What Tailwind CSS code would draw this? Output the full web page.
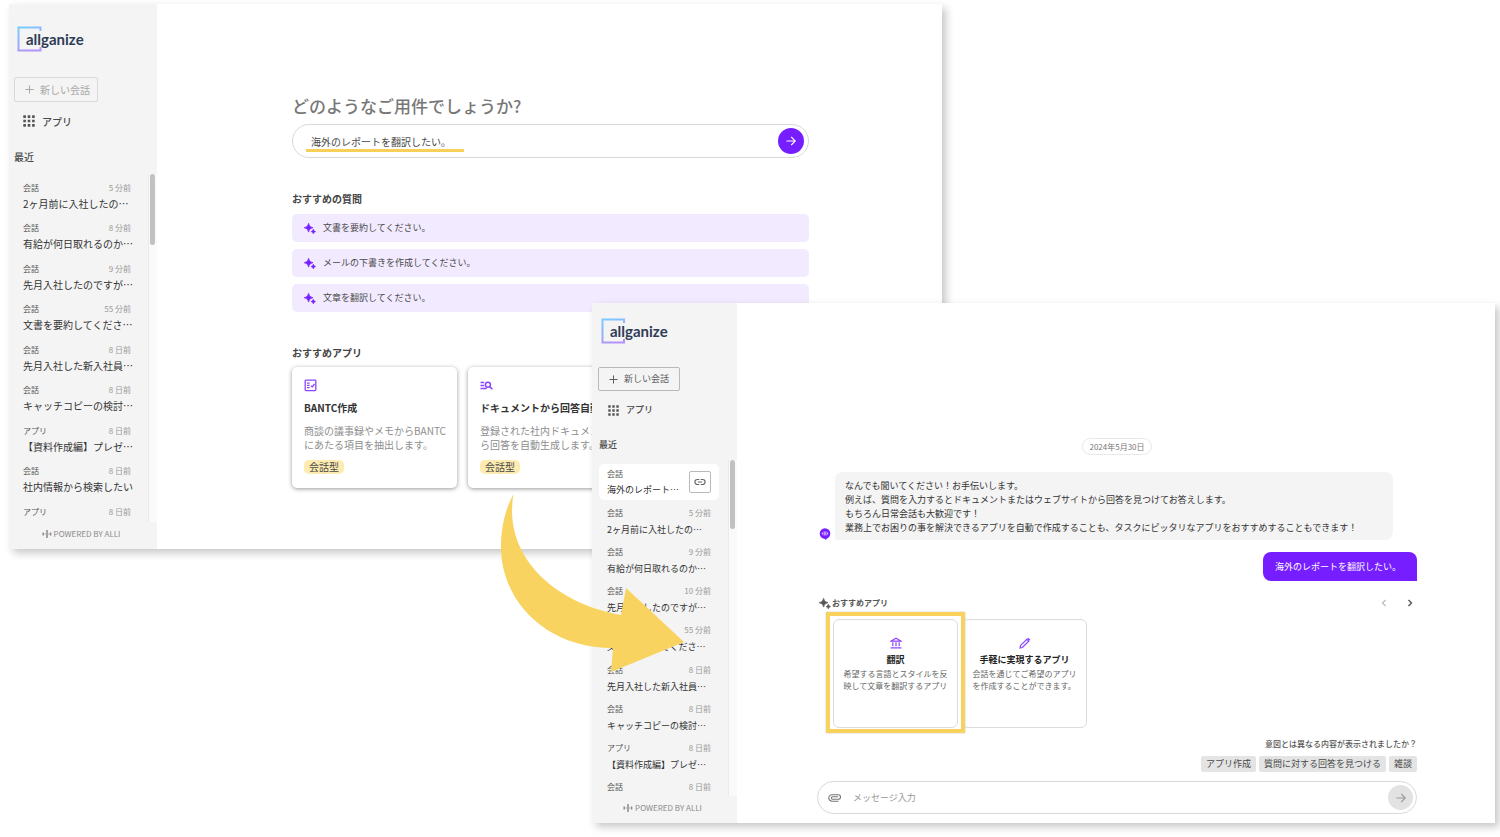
<!DOCTYPE html>
<html lang="ja">
<head>
<meta charset="utf-8">
<title>allganize</title>
<script src="https://cdn.jsdelivr.net/npm/@tailwindcss/browser@4"></script>
</head>
<body class="bg-white font-['Noto_Sans_CJK_JP',sans-serif] text-[10px] text-[#4a4a4a]">

<svg class="absolute size-0" aria-hidden="true">
  <defs>
    <linearGradient id="brand" gradientUnits="userSpaceOnUse" x1="8" y1="2" x2="16" y2="26"><stop offset="0" stop-color="#7cc9ff"/><stop offset="1" stop-color="#b592fa"/></linearGradient>
    <symbol id="plus" viewBox="0 0 10 10"><path d="M5 .5v9M.5 5h9" stroke="currentColor" stroke-width="1.1" fill="none"/></symbol>
    <symbol id="grid" viewBox="0 0 12 12"><path d="M.3.3h2.6v2.6H.3zM4.7.3h2.6v2.6H4.7zM9.1.3h2.6v2.6H9.1zM.3 4.7h2.6v2.6H.3zM4.7 4.7h2.6v2.6H4.7zM9.1 4.7h2.6v2.6H9.1zM.3 9.1h2.6v2.6H.3zM4.7 9.1h2.6v2.6H4.7zM9.1 9.1h2.6v2.6H9.1z" fill="currentColor"/></symbol>
    <symbol id="spark" viewBox="0 0 12 11"><path d="M4.6.3Q5 4.3 9 4.7 5 5.1 4.6 9.1 4.2 5.1.2 4.7 4.2 4.3 4.6.3zM9.3 6.3Q9.6 8.3 11.5 8.6 9.6 8.9 9.3 10.8 9 8.9 7.1 8.6 9 8.3 9.3 6.3z" fill="currentColor" stroke="currentColor" stroke-width=".7"/></symbol>
    <symbol id="arrow" viewBox="0 0 10 10"><path d="M.5 5h8.6M5.2.9 9.2 5 5.2 9.1" stroke="currentColor" stroke-width="1.2" fill="none"/></symbol>
    <symbol id="bars" viewBox="0 0 10 8"><path d="M1.2 2.4v3.2M8.6 2.4v3.2" stroke="currentColor" stroke-width="1.5"/><path d="M3.2 3v2" stroke="currentColor" stroke-width=".5"/><path d="M5 0v8" stroke="currentColor" stroke-width="1.5"/><path d="M6.8 3v2" stroke="currentColor" stroke-width=".5"/></symbol>
  </defs>
</svg>

<div class="relative min-h-screen overflow-hidden">

  <!-- Home window -->
  <section class="absolute top-1 left-[9px] flex h-[545px] w-[933px] bg-white shadow-[4px_4px_8px_rgba(0,0,0,0.22)]">
    <aside class="flex w-[148px] shrink-0 flex-col bg-[#f4f4f4]">
      <a href="#" class="mt-[21px] ml-2 flex h-7 items-center font-['Lato',sans-serif] text-[15px] font-bold text-[#2f3c56]">
        <svg class="h-7 w-[25px]" viewBox="0 0 25 28"><path d="M23.5 6V2.5h-22v23h22V22" fill="none" stroke="url(#brand)" stroke-width="2"/></svg>
        <span class="-ml-4 leading-5">allganize</span>
      </a>
      <button class="mt-6 ml-[5px] flex h-[25px] w-[84px] items-center gap-1.5 rounded-xs border border-[#d9d9d9] pb-px pl-2.5 text-[#a9a9a9]">
        <svg class="size-[9px]"><use href="#plus"/></svg>新しい会話
      </button>
      <a href="#" class="mt-[9px] ml-3.5 flex h-5 items-center gap-[7px] font-medium"><svg class="size-3 text-[#555]"><use href="#grid"/></svg>アプリ</a>
      <h2 class="mt-4 ml-[5px] h-5 leading-5 font-medium">最近</h2>
      <div class="mt-[7px] flex min-h-0 flex-1 overflow-hidden">
        <ul class="mt-1.5 grid h-[364px] flex-1 auto-rows-fr grid-cols-1 pr-[17px] pl-3.5 [&_a]:block [&_b]:block [&_b]:leading-5 [&_b]:font-normal [&_b]:text-[#333] [&_b]:whitespace-nowrap [&_p]:flex [&_p]:justify-between [&_p]:pt-0.5 [&_p]:text-[8px] [&_p]:leading-3 [&_p]:text-[#555] [&_time]:text-[#999]">
          <li><a href="#"><p>会話<time>5 分前</time></p><b>2ヶ月前に入社したの…</b></a></li>
          <li><a href="#"><p>会話<time>8 分前</time></p><b>有給が何日取れるのか…</b></a></li>
          <li><a href="#"><p>会話<time>9 分前</time></p><b>先月入社したのですが…</b></a></li>
          <li><a href="#"><p>会話<time>55 分前</time></p><b>文書を要約してくださ…</b></a></li>
          <li><a href="#"><p>会話<time>8 日前</time></p><b>先月入社した新入社員…</b></a></li>
          <li><a href="#"><p>会話<time>8 日前</time></p><b>キャッチコピーの検討…</b></a></li>
          <li><a href="#"><p>アプリ<time>8 日前</time></p><b>【資料作成編】プレゼ…</b></a></li>
          <li><a href="#"><p>会話<time>8 日前</time></p><b>社内情報から検索したい</b></a></li>
          <li><a href="#"><p>アプリ<time>8 日前</time></p></a></li>
        </ul>
        <div class="w-[9px] shrink-0 border-l border-[#eaeaea] bg-[#fafafa] pl-px"><div class="h-[71px] w-[5px] rounded-full bg-[#c1c1c1]"></div></div>
      </div>
      <footer class="flex h-[27px] items-center justify-center gap-0.5 pr-1 pb-1 text-[8px] text-[#8a8a8a]"><svg class="h-2 w-2.5"><use href="#bars"/></svg>POWERED BY ALLI</footer>
    </aside>

    <main class="flex-1 pt-[88px] pl-0.5">
      <div class="mx-auto max-w-[517px]">
        <h1 class="h-8 text-[17px] leading-7 font-medium text-[#777]">どのようなご用件でしょうか?</h1>
        <form class="relative flex h-[34px] items-center rounded-full border border-[#d9d9d9] pr-1 pl-[18px]">
          <input aria-label="ご用件" class="min-w-0 flex-1 outline-none" value="海外のレポートを翻訳したい。">
          <span class="absolute bottom-[5px] left-[13px] h-[3px] w-[158px] bg-[#f8cf57]"></span>
          <button type="button" aria-label="送信" class="grid size-[26px] place-items-center rounded-full bg-[#761eff] text-white"><svg class="size-2.5"><use href="#arrow"/></svg></button>
        </form>
        <h2 class="mt-[31px] h-[25px] leading-5 font-bold text-[#444]">おすすめの質問</h2>
        <div class="flex flex-col gap-[7px] text-[9px] [&_button]:flex [&_button]:h-7 [&_button]:items-center [&_button]:gap-[7px] [&_button]:rounded-[5px] [&_button]:bg-[#f2eaff] [&_button]:px-3 [&_svg]:h-[11px] [&_svg]:w-3 [&_svg]:text-[#761eff]">
          <button><svg><use href="#spark"/></svg>文書を要約してください。</button>
          <button><svg><use href="#spark"/></svg>メールの下書きを作成してください。</button>
          <button><svg><use href="#spark"/></svg>文章を翻訳してください。</button>
        </div>
        <h2 class="mt-[31px] h-6 leading-5 font-bold text-[#444]">おすすめアプリ</h2>
        <div class="grid grid-cols-3 gap-[11px] [&_article]:h-[121px] [&_article]:rounded-[5px] [&_article]:bg-white [&_article]:pt-3 [&_article]:pl-3 [&_article]:whitespace-nowrap [&_article]:shadow-[0_1px_4px_rgba(0,0,0,0.4)] [&_h3]:mt-1.5 [&_h3]:leading-5 [&_h3]:font-bold [&_h3]:text-[#333] [&_p]:mt-1.5 [&_p]:leading-[14px] [&_p]:text-[#8e8e8e] [&_span]:mt-2 [&_span]:inline-block [&_span]:rounded-[5px] [&_span]:bg-[#fdebb0] [&_span]:px-[5px] [&_span]:leading-[14px] [&_svg]:size-[13px] [&_svg]:text-[#8b46ff]">
          <article>
            <svg viewBox="0 0 13 13" fill="none" stroke="currentColor" stroke-width="1.3"><rect x="1.2" y="1.2" width="10.6" height="10.4" rx=".8"/><path d="M3 4.2h2.6M3 6.4h2.6M3 8.7h2.6M7 6.8l1.2 1.1L10.5 5"/></svg>
            <h3>BANTC作成</h3>
            <p>商談の議事録やメモからBANTC<br>にあたる項目を抽出します。</p>
            <span>会話型</span>
          </article>
          <article>
            <svg viewBox="0 0 13 13" fill="none" stroke="currentColor" stroke-width="1.5"><path d="M.5 3.4h3.6M.5 6.4h3.6M.5 9.5h6.2"/><circle cx="7.9" cy="5.8" r="2.5"/><path d="M9.7 7.6l2.7 2.7"/></svg>
            <h3>ドキュメントから回答自動生成</h3>
            <p>登録された社内ドキュメントか<br>ら回答を自動生成します。</p>
            <span>会話型</span>
          </article>
        </div>
      </div>
    </main>
  </section>

  <!-- Conversation window -->
  <section class="absolute top-[303px] left-[592px] flex h-[520px] w-[903px] bg-white text-[9px] shadow-[4px_4px_8px_rgba(0,0,0,0.22)]">
    <aside class="flex w-[145px] shrink-0 flex-col bg-[#f4f4f4]">
      <a href="#" class="mt-3.5 ml-[9px] flex h-7 items-center font-['Lato',sans-serif] text-[15px] font-bold text-[#2f3c56]">
        <svg class="h-7 w-[25px]" viewBox="0 0 25 28"><path d="M23 6V2.5H1.5v23H23V22" fill="none" stroke="url(#brand)" stroke-width="2"/></svg>
        <span class="-ml-4 leading-5">allganize</span>
      </a>
      <button class="mt-[22px] ml-1.5 flex h-6 w-[82px] items-center gap-1.5 rounded-xs border border-[#b9b9b9] pl-2.5 text-[#5c5c5c]">
        <svg class="size-[9px]"><use href="#plus"/></svg>新しい会話
      </button>
      <a href="#" class="mt-[9px] ml-4 flex h-5 items-center gap-[7px] font-medium"><svg class="size-[11px] text-[#555]"><use href="#grid"/></svg>アプリ</a>
      <h2 class="mt-[15px] ml-[7px] h-5 leading-5 font-medium">最近</h2>
      <div class="mt-[5px] flex min-h-0 flex-1 overflow-hidden">
        <div class="flex-1">
          <div class="mt-1 ml-[7px] flex h-9 w-[120px] items-center justify-between rounded-[5px] bg-white pr-2 pl-2">
            <a href="#" class="pt-1 whitespace-nowrap"><span class="block text-[8px] leading-3 text-[#555]">会話</span><span class="block leading-5 text-[#333]">海外のレポート…</span></a>
            <button aria-label="リンクをコピー" class="grid size-[22px] place-items-center rounded-xs border border-[#b9b9b9] text-[#666]">
              <svg class="h-2 w-3" viewBox="0 0 12 8" fill="none" stroke="currentColor" stroke-width="1.2"><path d="M5.3 1.5H3.4a2.5 2.5 0 000 5h1.9M6.7 1.5h1.9a2.5 2.5 0 010 5H6.7M3.8 4h4.4"/></svg>
            </button>
          </div>
          <ul class="mt-[5px] grid h-[313px] auto-rows-fr grid-cols-1 pr-[17px] pl-[15px] [&_a]:block [&_b]:block [&_b]:leading-[21px] [&_b]:font-normal [&_b]:text-[#333] [&_b]:whitespace-nowrap [&_p]:flex [&_p]:justify-between [&_p]:pt-0.5 [&_p]:text-[8px] [&_p]:leading-3 [&_p]:text-[#555] [&_time]:text-[#999]">
            <li><a href="#"><p>会話<time>5 分前</time></p><b>2ヶ月前に入社したの…</b></a></li>
            <li><a href="#"><p>会話<time>9 分前</time></p><b>有給が何日取れるのか…</b></a></li>
            <li><a href="#"><p>会話<time>10 分前</time></p><b>先月入社したのですが…</b></a></li>
            <li><a href="#"><p>会話<time>55 分前</time></p><b>文書を要約してくださ…</b></a></li>
            <li><a href="#"><p>会話<time>8 日前</time></p><b>先月入社した新入社員…</b></a></li>
            <li><a href="#"><p>会話<time>8 日前</time></p><b>キャッチコピーの検討…</b></a></li>
            <li><a href="#"><p>アプリ<time>8 日前</time></p><b>【資料作成編】プレゼ…</b></a></li>
            <li><a href="#"><p>会話<time>8 日前</time></p></a></li>
          </ul>
        </div>
        <div class="w-[9px] shrink-0 border-l border-[#eaeaea] bg-[#fafafa] pl-px"><div class="h-[69px] w-[5px] rounded-full bg-[#c1c1c1]"></div></div>
      </div>
      <footer class="flex h-[27px] items-center justify-center gap-0.5 pr-1 pb-1 text-[8px] text-[#8a8a8a]"><svg class="h-2 w-2.5"><use href="#bars"/></svg>POWERED BY ALLI</footer>
    </aside>

    <main class="flex-1 pl-0.5">
      <div class="mx-auto flex h-full max-w-[600px] flex-col pt-[135px] pb-[9px]">
        <time class="self-center rounded-full border border-[#e8e8e8] px-1.5 text-[8px] leading-[15px] text-[#777]">2024年5月30日</time>
        <div class="mt-[17px] flex items-end gap-1 pl-0.5">
          <svg class="h-3 w-3" viewBox="0 0 12 12"><circle cx="6" cy="5.5" r="5.3" fill="#761eff"/><path d="M5 10h3l-1.2 2z" fill="#761eff"/><path d="M3.4 4.5v2M5.2 3.5v4M6.9 3.5v4M8.6 4.5v2" stroke="#fff" stroke-width=".8"/></svg>
          <p class="w-[558px] rounded-lg rounded-bl-none bg-[#f4f4f4] px-2.5 pt-[7px] pb-[5px] leading-[14px] text-[#333]">なんでも聞いてください！お手伝いします。<br>例えば、質問を入力するとドキュメントまたはウェブサイトから回答を見つけてお答えします。<br>もちろん日常会話も大歓迎です！<br>業務上でお困りの事を解決できるアプリを自動で作成することも、タスクにピッタリなアプリをおすすめすることもできます！</p>
        </div>
        <p class="mt-3 w-[154px] self-end rounded-lg rounded-br-none bg-[#761eff] px-3 leading-[29px] text-white">海外のレポートを翻訳したい。</p>
        <div class="mt-3 flex h-5 items-center gap-px pl-0.5 text-[#555]">
          <svg class="h-[11px] w-3"><use href="#spark"/></svg>
          <h2 class="flex-1 text-[8px] font-bold">おすすめアプリ</h2>
          <div class="flex gap-[18px] pr-[3px]">
            <button aria-label="前へ" class="text-[#bbb]"><svg class="size-2" viewBox="0 0 8 8" fill="none" stroke="currentColor" stroke-width="1.2"><path d="M5.5 1 2.5 4l3 3"/></svg></button>
            <button aria-label="次へ" class="text-[#555]"><svg class="size-2" viewBox="0 0 8 8" fill="none" stroke="currentColor" stroke-width="1.4"><path d="M2.5 1l3 3-3 3"/></svg></button>
          </div>
        </div>
        <div class="relative mt-1.5 flex gap-1 pl-4 [&_article]:flex [&_article]:h-[109px] [&_article]:w-[125px] [&_article]:flex-col [&_article]:items-center [&_article]:rounded-md [&_article]:border [&_article]:border-[#dcdcdc] [&_article]:pt-[17px] [&_article]:whitespace-nowrap [&_h3]:mt-[3px] [&_h3]:leading-4 [&_h3]:font-bold [&_h3]:text-[#222] [&_p]:text-[8px] [&_p]:leading-3 [&_p]:text-[#666] [&_svg]:size-3 [&_svg]:text-[#8b46ff]">
          <article>
            <svg viewBox="0 0 12 12" fill="none" stroke="currentColor" stroke-width="1.2"><path d="M1 4.1h10L6 1.2zM2.8 5.2v4M6 5.2v4M9.2 5.2v4M.6 10.9h10.8"/></svg>
            <h3>翻訳</h3>
            <p>希望する言語とスタイルを反<br>映して文章を翻訳するアプリ</p>
          </article>
          <article>
            <svg viewBox="0 0 12 12" fill="none" stroke="currentColor"><path d="M1 11l.5-2.4 6.3-6.3 1.9 1.9-6.3 6.3z" stroke-width="1.2"/><path d="M8.6 1.4l2 2" stroke-width="2"/></svg>
            <h3>手軽に実現するアプリ</h3>
            <p>会話を通じてご希望のアプリ<br>を作成することができます。</p>
          </article>
          <span class="absolute -top-[7px] left-[9px] h-[121px] w-[139px] border-4 border-[#f8d25c] shadow-[0_0_2px_rgba(0,0,0,0.2)]"></span>
        </div>
        <p class="mt-auto text-right text-[8px] leading-4 font-medium text-[#555]">意図とは異なる内容が表示されましたか？</p>
        <div class="mt-1 flex justify-end gap-[3px] [&_button]:rounded-xs [&_button]:bg-[#e4e4e4] [&_button]:px-[5px] [&_button]:leading-4">
          <button>アプリ作成</button><button>質問に対する回答を見つける</button><button>雑談</button>
        </div>
        <form class="mt-[9px] flex h-[33px] items-center rounded-full border border-[#d9d9d9] pr-[3px] pl-2.5">
          <svg class="h-2 w-[13px] text-[#777]" viewBox="0 0 13 8" fill="none" stroke="currentColor" stroke-width="1.1"><path d="M10.6 7.2H4A3.2 3.2 0 014 .8h6.3a2.2 2.2 0 010 4.5H4.6a1.2 1.2 0 010-2.5h5.5"/></svg>
          <input aria-label="メッセージ入力" placeholder="メッセージ入力" class="ml-3 min-w-0 flex-1 outline-none placeholder:text-[#999]">
          <button type="button" aria-label="送信" class="grid size-[25px] place-items-center rounded-full bg-[#e2e2e2] text-[#999]"><svg class="size-2.5"><use href="#arrow"/></svg></button>
        </form>
      </div>
    </main>
  </section>

  <!-- Arrow from the first window to the second -->
  <svg class="absolute top-[493px] left-[499px] h-[180px] w-[187px]" viewBox="499 493 187 180" aria-hidden="true"><path d="M513.5 494C504 512 501 530 501 547C501 600 545 648 613 648L611 672L684 642L626 588L621 615C560 605 502 560 513.5 494Z" fill="#f9d35f"/></svg>
</div>
</body>
</html>
